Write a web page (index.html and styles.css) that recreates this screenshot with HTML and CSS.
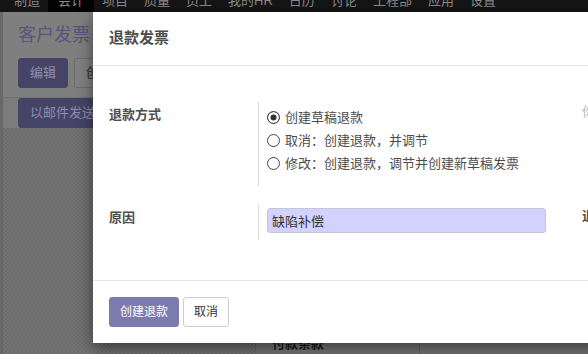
FILE: index.html
```html
<!DOCTYPE html>
<html lang="zh-CN">
  <head>
    <meta charset="UTF-8" />
    <meta name="viewport" content="width=device-width, initial-scale=1.0" />
    <title>客户发票 - 退款发票</title>
    <link rel="stylesheet" href="styles.css">
  </head>
  <body>
    <!-- 顶部菜单（被遮罩压暗） -->
    <nav class="topbar">
      <ul class="menu">
        <li>制造</li>
        <li class="active">会计</li>
        <li>项目</li>
        <li>质量</li>
        <li>员工</li>
        <li>我的HR</li>
        <li>日历</li>
        <li>讨论</li>
        <li>工程部</li>
        <li>应用</li>
        <li>设置</li>
      </ul>
    </nav>

    <div class="app">
      <div class="control-panel">
        <h2 class="breadcrumb">客户发票</h2>
        <div class="cp-buttons">
          <button class="dim-primary">编辑</button>
          <button class="dim-default">创建</button>
        </div>
      </div>
      <div class="statusbar">
        <button class="dim-primary">以邮件发送</button>
      </div>
      <div class="form-view">
        <div class="sheet">
          <div class="sheet-row">
            <span class="sheet-label">付款条款</span>
            <span></span>
          </div>
        </div>
      </div>
    </div>

    <!-- 退款弹窗 -->
    <div class="modal">
      <header class="modal-header">
        <h4>退款发票</h4>
      </header>

      <div class="modal-body">
        <div class="form-row">
          <div class="field-col">
            <label class="field-label">退款方式</label>
            <div class="field-value radios">
              <label class="radio-item">
                <input type="radio" name="method" checked />
                <span>创建草稿退款</span>
              </label>
              <label class="radio-item">
                <input type="radio" name="method" />
                <span>取消：创建退款，并调节</span>
              </label>
              <label class="radio-item">
                <input type="radio" name="method" />
                <span>修改：创建退款，调节并创建新草稿发票</span>
              </label>
            </div>
          </div>
          <div class="field-col">
            <p class="help-text">你可以在验证之前直接编辑这个退款草稿。</p>
          </div>
        </div>

        <div class="form-row">
          <div class="field-col">
            <label class="field-label">原因</label>
            <div class="field-value">
              <input class="required-input" type="text" value="缺陷补偿" />
            </div>
          </div>
          <div class="field-col">
            <label class="field-label">退款日期</label>
            <div class="field-value"></div>
          </div>
        </div>
      </div>

      <footer class="modal-footer">
        <button class="btn btn-primary">创建退款</button>
        <button class="btn btn-secondary">取消</button>
      </footer>
    </div>
  </body>
</html>
```

FILE: styles.css
```css
:root {
  --brand: #7c7bad;
  --brand-dim: #464466;
  --text: #4c4c4c;
  --border: #e5e5e5;
}

* {
  margin: 0;
  padding: 0;
  box-sizing: border-box;
  font-family: "Liberation Sans", "Noto Sans CJK TC", sans-serif;
}

body {
  width: 588px;
  height: 354px;
  overflow: hidden;
  position: relative;
  background: #727272;
  font-size: 13px;
  line-height: 1.5;
  color: var(--text);
}

button {
  font-size: 13px;
  line-height: 1.5;
  cursor: pointer;
}

/* 顶部菜单 */
.topbar {
  height: 12px;
  overflow: hidden;
  background: #151515;
}

.menu {
  list-style: none;
  display: flex;
  padding-left: 6px;
  margin-top: -10px;
}

.menu li {
  padding: 0 8px;
  line-height: 22px;
  height: 22px;
  color: #8a8a8a;
  font-size: 13px;
}

.menu li.active {
  background: #030303;
  padding: 0 10px;
}

/* 背景页面 */
.app {
  border-left: 3px solid #686868;
  height: 342px;
  display: flex;
  flex-direction: column;
}

.control-panel {
  background: #7f7f7f;
  padding: 10px 15px 9px;
  border-bottom: 1px solid #707070;
}

.breadcrumb {
  font-size: 18px;
  font-weight: normal;
  color: #56557a;
  line-height: 27px;
}

.cp-buttons {
  display: flex;
  gap: 6px;
  margin-top: 9px;
}

.dim-primary {
  background: var(--brand-dim);
  color: #8f8db0;
  border: 1px solid var(--brand-dim);
  border-radius: 3px;
  padding: 0 11px;
  height: 30px;
}

.dim-default {
  background: #808080;
  color: #262626;
  border: 1px solid #6c6c6c;
  border-radius: 3px;
  padding: 0 11px;
  height: 30px;
}

.statusbar {
  background: #7c7c7c;
  padding-left: 15px;
  height: 30px;
  display: flex;
}

.form-view {
  flex: 1;
  padding-left: 252px;
  background: repeating-conic-gradient(#747474 0 25%, #6c6c6c 0 50%) 0 0 / 4px 4px;
}

.sheet {
  background: #767676;
  border-left: 1px solid #666;
  height: 100%;
  padding: 206px 0 0 16px;
}

.sheet-row {
  display: grid;
  grid-template-columns: 148px 1fr;
}

.sheet-label {
  font-weight: bold;
  color: #1c1c1c;
  border-right: 1px solid #666;
}

/* 弹窗 */
.modal {
  position: absolute;
  top: 12px;
  left: 93px;
  width: 978px;
  background: white;
  box-shadow: 0 5px 15px rgba(0, 0, 0, 0.5);
}

.modal-header {
  height: 54px;
  padding: 0 16px 1px;
  display: flex;
  align-items: center;
  border-bottom: 1px solid var(--border);
}

.modal-header h4 {
  font-size: 15px;
  font-weight: bold;
  color: var(--text);
}

.modal-body {
  padding: 36px 16px 40px;
  display: flex;
  flex-direction: column;
  gap: 19px;
}

.form-row {
  display: grid;
  grid-template-columns: 473px 473px;
}

.field-col {
  display: grid;
  grid-template-columns: 150px 1fr;
  padding-right: 36px;
}

.field-label {
  font-weight: bold;
  padding-top: 3px;
  border-right: 1px solid #ddd;
}

.field-col:last-child .field-label {
  border-right: none;
  padding-top: 1px;
}

.field-value {
  padding: 3px 0 7px 8px;
}

.radios {
  padding: 4px 0 11px 8px;
}

.radio-item {
  display: flex;
  align-items: center;
  height: 23px;
}

.radio-item input {
  appearance: none;
  width: 13px;
  height: 13px;
  border: 1px solid #444;
  border-radius: 50%;
  margin-right: 5px;
  background: white;
}

.radio-item input:checked {
  background: #333;
  box-shadow: inset 0 0 0 2.5px white;
}

.help-text {
  color: #b5b5b5;
  grid-column: 1 / -1;
}

.required-input {
  width: 100%;
  height: 25px;
  padding: 0 4px;
  font-size: 13px;
  color: #333;
  background: #d2d2ff;
  border: 1px solid #c6c6d6;
  border-radius: 3px;
  outline: none;
}

.modal-footer {
  border-top: 1px solid var(--border);
  padding: 16px;
  display: flex;
  gap: 4px;
}

.btn {
  font-size: 12px;
  line-height: 18px;
  padding: 5px 10px;
  border-radius: 3px;
}

.btn-primary {
  background: var(--brand);
  border: 1px solid var(--brand);
  color: white;
}

.btn-secondary {
  background: white;
  border: 1px solid #ccc;
  color: #333;
}
```
